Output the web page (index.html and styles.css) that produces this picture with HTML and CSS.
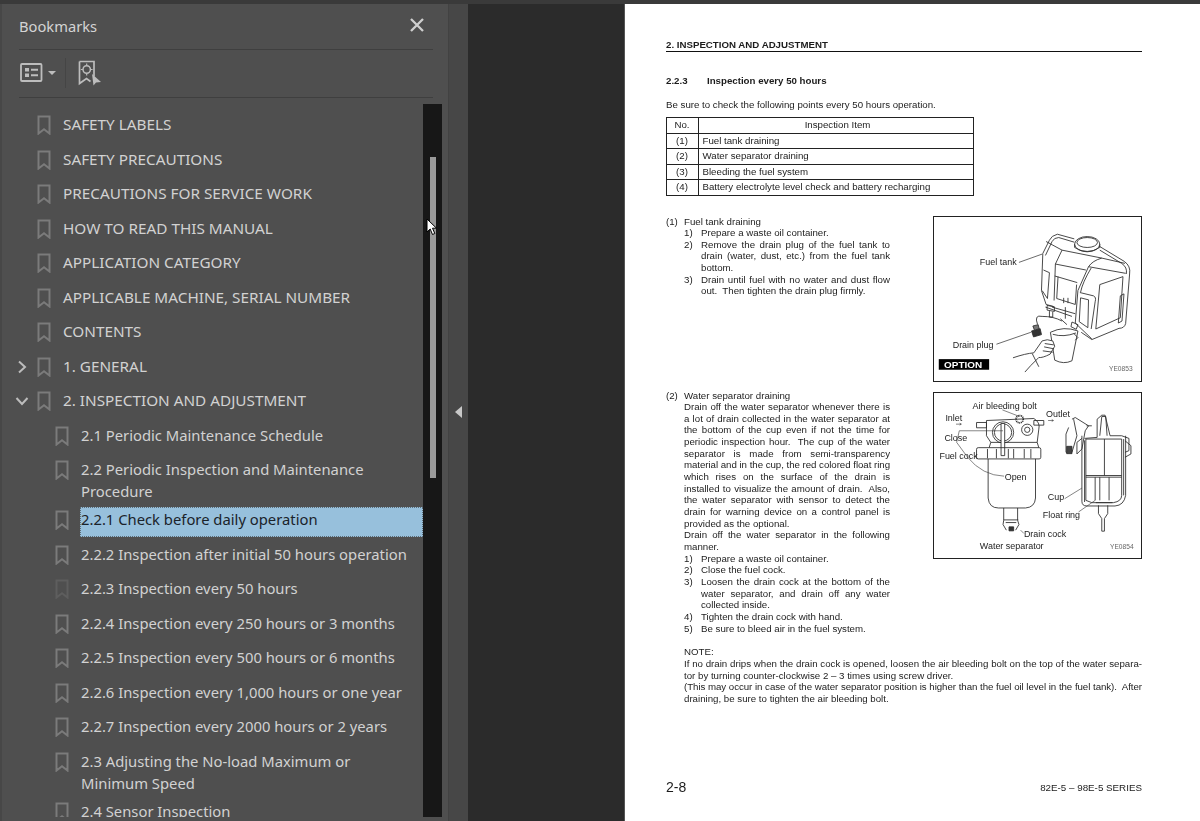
FILE: index.html
```html
<!DOCTYPE html>
<html lang="en">
<head>
<meta charset="utf-8">
<title>Bookmarks</title>
<link rel="stylesheet" href="styles.css">
</head>
<body>
<svg class="defs" width="0" height="0" aria-hidden="true">
  <symbol id="bm" viewBox="0 0 14 20"><path d="M1.5 1.5h11v17L7 14.2 1.5 18.5z" fill="none" stroke="currentColor" stroke-width="2"/></symbol>
</svg>
<div class="app">
  <aside class="panel">
    <header class="panel-head">
      <span class="panel-title">Bookmarks</span>
      <svg class="close" width="16" height="16" viewBox="0 0 16 16"><path d="M2 2l12 12M14 2L2 14" stroke="#cfcfcf" stroke-width="2.3" fill="none"/></svg>
    </header>
    <div class="toolbar">
      <svg width="23" height="19" viewBox="0 0 23 19"><rect x="1" y="1" width="20.5" height="17" rx="1" fill="none" stroke="#bdbdbd" stroke-width="1.8"/><rect x="5" y="5" width="4" height="3.5" fill="#bdbdbd"/><rect x="5" y="10.500" width="4" height="3.500" fill="#bdbdbd"/><path d="M11 6.700h7M11 12.200h7" stroke="#bdbdbd" stroke-width="2"/></svg>
      <span class="caret"></span>
      <span class="tool-sep"></span>
      <svg width="24" height="26" viewBox="0 0 24 26"><path d="M1.500 1.500h14.500v15M1.500 1.500v22l7-5 4 3" fill="none" stroke="#bdbdbd" stroke-width="1.700"/><circle cx="8.700" cy="9.500" r="3.700" fill="none" stroke="#bdbdbd" stroke-width="1.500"/><path d="M8.700 3.500v2M8.700 13.500v2M2.800 9.500h2M12.600 9.500h2" stroke="#bdbdbd" stroke-width="1.200"/><path d="M14 14l9 8-5 .5-2.500 3z" fill="#bdbdbd"/></svg>
    </div>
    <div class="tree-wrap">
      <ul class="tree">
        <li class="row"><svg class="bm"><use href="#bm"/></svg><span class="label">SAFETY LABELS</span></li>
        <li class="row"><svg class="bm"><use href="#bm"/></svg><span class="label">SAFETY PRECAUTIONS</span></li>
        <li class="row"><svg class="bm"><use href="#bm"/></svg><span class="label">PRECAUTIONS FOR SERVICE WORK</span></li>
        <li class="row"><svg class="bm"><use href="#bm"/></svg><span class="label">HOW TO READ THIS MANUAL</span></li>
        <li class="row"><svg class="bm"><use href="#bm"/></svg><span class="label">APPLICATION CATEGORY</span></li>
        <li class="row"><svg class="bm"><use href="#bm"/></svg><span class="label">APPLICABLE MACHINE, SERIAL NUMBER</span></li>
        <li class="row"><svg class="bm"><use href="#bm"/></svg><span class="label">CONTENTS</span></li>
        <li class="row"><svg class="chev" viewBox="0 0 12 14"><path d="M3 1.500L9 7l-6 5.500" fill="none" stroke="#bcbcbc" stroke-width="2"/></svg><svg class="bm"><use href="#bm"/></svg><span class="label">1. GENERAL</span></li>
        <li class="row"><svg class="chev" viewBox="0 0 14 12"><path d="M1.500 3L7 9l5.500-6" fill="none" stroke="#bcbcbc" stroke-width="2"/></svg><svg class="bm"><use href="#bm"/></svg><span class="label">2. INSPECTION AND ADJUSTMENT</span></li>
        <li class="row sub"><svg class="bm"><use href="#bm"/></svg><span class="label">2.1 Periodic Maintenance Schedule</span></li>
        <li class="row sub"><svg class="bm"><use href="#bm"/></svg><span class="label">2.2 Periodic Inspection and Maintenance<br>Procedure</span></li>
        <li class="row sub"><svg class="bm"><use href="#bm"/></svg><span class="label selected">2.2.1 Check before daily operation</span></li>
        <li class="row sub"><svg class="bm"><use href="#bm"/></svg><span class="label">2.2.2 Inspection after initial 50 hours operation</span></li>
        <li class="row sub"><svg class="bm dim"><use href="#bm"/></svg><span class="label">2.2.3 Inspection every 50 hours</span></li>
        <li class="row sub"><svg class="bm"><use href="#bm"/></svg><span class="label">2.2.4 Inspection every 250 hours or 3 months</span></li>
        <li class="row sub"><svg class="bm"><use href="#bm"/></svg><span class="label">2.2.5 Inspection every 500 hours or 6 months</span></li>
        <li class="row sub"><svg class="bm"><use href="#bm"/></svg><span class="label">2.2.6 Inspection every 1,000 hours or one year</span></li>
        <li class="row sub"><svg class="bm"><use href="#bm"/></svg><span class="label">2.2.7 Inspection every 2000 hours or 2 years</span></li>
        <li class="row sub"><svg class="bm"><use href="#bm"/></svg><span class="label">2.3 Adjusting the No-load Maximum or<br>Minimum Speed</span></li>
        <li class="row sub"><svg class="bm"><use href="#bm"/></svg><span class="label">2.4 Sensor Inspection</span></li>
      </ul>
      <div class="scrollbar"><div class="thumb"></div></div>
    </div>
  </aside>
  <div class="strip"><span class="collapse"></span></div>
  <main class="viewer">
    <article class="pdf">
      <h1 class="p-head">2. INSPECTION AND ADJUSTMENT</h1>
      <h2 class="p-sub"><span class="p-sub-no">2.2.3</span>Inspection every 50 hours</h2>
      <p class="p-intro">Be sure to check the following points every 50 hours operation.</p>
      <table class="p-table">
        <tr><th class="c1">No.</th><th>Inspection Item</th></tr>
        <tr><td class="c1">(1)</td><td>Fuel tank draining</td></tr>
        <tr><td class="c1">(2)</td><td>Water separator draining</td></tr>
        <tr><td class="c1">(3)</td><td>Bleeding the fuel system</td></tr>
        <tr><td class="c1">(4)</td><td>Battery electrolyte level check and battery recharging</td></tr>
      </table>

      <section class="p-sec first">
        <div class="p-text">
          <div class="ln"><span class="n0">(1)</span>Fuel tank draining</div>
          <div class="step"><span class="n">1)</span><div>Prepare a waste oil container.</div></div>
          <div class="step"><span class="n">2)</span><div><div class="j">Remove the drain plug of the fuel tank to</div><div class="j">drain (water, dust, etc.) from the fuel tank</div><div>bottom.</div></div></div>
          <div class="step"><span class="n">3)</span><div><div class="j">Drain until fuel with no water and dust flow</div><div>out.&nbsp; Then tighten the drain plug firmly.</div></div></div>
        </div>
        <figure class="fig fig1">
          <svg viewBox="24 18 624 495" width="207" height="164">
            <g fill="none" stroke="#2c2c2c" stroke-width="2.600" stroke-linejoin="round">
              <path d="M352 128L372 88Q378 74 396 70L447 84M522 106L598 152Q618 166 614 190L602 340Q598 354 582 354L500 388L468 366"/>
              <path d="M360 134L380 92Q386 80 400 80L447 94M524 118L590 158Q608 170 604 190"/>
              <path d="M352 128L348 240L362 282L384 288M362 92L410 118L390 160L386 270"/>
              <path d="M410 118L530 142L600 158M530 142Q502 150 490 168L458 240L450 338L500 386M490 168L602 188M498 172Q472 215 466 245"/>
              <path d="M390 160L482 178M388 196L456 216M398 198L394 264L450 282L454 222"/>
              <path d="M464 246L505 256Q514 260 510 274L498 356"/>
              <path d="M466 262L490 268L488 352L462 334z"/>
              <path d="M354 178L372 186L366 264L350 240"/>
              <path d="M524 222L594 198L586 322L512 356z"/>
              <path d="M586 256L597 250L591 332L580 338z"/>
              <ellipse cx="486" cy="100" rx="38" ry="23" fill="#fff"/>
              <ellipse cx="486" cy="95" rx="31" ry="15"/>
              <path d="M448 100v10M524 100v10M448 110Q486 134 524 110"/>
              <path d="M365 285l22 4v14l-22-4zM372 302v18h10v-16M420 290v35M440 335l18 8-5 14-16-8zM405 325l20 18M415 262v16M428 262v16"/>
              <path d="M380 290L450 310M360 290L440 318"/>
              <path d="M336 342Q325 312 350 318Q385 318 410 332"/>
              <path d="M318 362l26-7 4 18-24 7z" fill="#333"/>
              <path d="M322 347l16-4 3 12-14 5z" fill="#777"/>
              <path d="M375 366Q415 346 458 362L440 452Q415 464 388 450z" fill="#fff"/>
              <path d="M382 372Q415 382 452 368M446 370l12 12-8 8"/>
              <path d="M262 443Q300 430 325 428L350 392Q365 385 382 392L388 408L374 432Q350 444 340 442L316 466L298 486M320 430L340 470M358 400L385 404M356 410L386 416M352 422L382 426" fill="#fff"/>
            </g>
            <g fill="none" stroke="#333" stroke-width="2.200"><path d="M280 155L350 130M212 402L316 366"/></g>
            <text x="162" y="163" class="fl">Fuel tank</text>
            <text x="80" y="413" class="fl">Drain plug</text>
            <rect x="38" y="447" width="152" height="32" fill="#000"/>
            <text x="54" y="474" class="fo">OPTION</text>
            <text x="552" y="482" class="fc">YE0853</text>
          </svg>
        </figure>
      </section>

      <section class="p-sec second">
        <div class="p-text">
          <div class="ln"><span class="n0">(2)</span>Water separator draining</div>
          <div class="in">
            <div class="j">Drain off the water separator whenever there is</div>
            <div class="j">a lot of drain collected in the water separator at</div>
            <div class="j">the bottom of the cup even if not the time for</div>
            <div class="j">periodic inspection hour.&nbsp; The cup of the water</div>
            <div class="j">separator is made from semi-transparency</div>
            <div class="j tight">material and in the cup, the red colored float ring</div>
            <div class="j">which rises on the surface of the drain is</div>
            <div class="j">installed to visualize the amount of drain.&nbsp; Also,</div>
            <div class="j">the water separator with sensor to detect the</div>
            <div class="j">drain for warning device on a control panel is</div>
            <div>provided as the optional.</div>
            <div class="j">Drain off the water separator in the following</div>
            <div>manner.</div>
          </div>
          <div class="step"><span class="n">1)</span><div>Prepare a waste oil container.</div></div>
          <div class="step"><span class="n">2)</span><div>Close the fuel cock.</div></div>
          <div class="step"><span class="n">3)</span><div><div class="j">Loosen the drain cock at the bottom of the</div><div class="j">water separator, and drain off any water</div><div>collected inside.</div></div></div>
          <div class="step"><span class="n">4)</span><div>Tighten the drain cock with hand.</div></div>
          <div class="step"><span class="n">5)</span><div>Be sure to bleed air in the fuel system.</div></div>
        </div>
        <figure class="fig fig2">
          <svg viewBox="24 21 624 498" width="207" height="165">
            <g fill="none" stroke="#2c2c2c" stroke-width="2.600" stroke-linejoin="round">
              <path d="M152 110h30v16h-30zM182 104L325 98M182 104V150L195 170H335L340 130Q345 110 325 98M325 104h30v14h-30zM195 170L190 186M335 170L340 186"/>
              <circle cx="232" cy="140" r="32"/>
              <circle cx="232" cy="140" r="26"/>
              <rect x="226" y="113" width="11" height="97" fill="#fff"/>
              <circle cx="305" cy="132" r="17"/>
              <circle cx="305" cy="132" r="8"/>
              <circle cx="282" cy="100" r="11" stroke-dasharray="3 2" stroke-width="5"/>
              <rect x="152" y="186" width="194" height="34" rx="5"/>
              <path d="M187 220V338Q190 368 218 368H300Q328 366 330 338V220"/>
              <path d="M185 190v28M212 190v28M248 190v28M264 190v28M296 190v28M316 190v28"/>
              <path d="M234 368V405L232 418L242 435M276 368V405L280 418L270 435M234 404h44M240 412h32"/>
              <rect x="250" y="425" width="14" height="12" fill="#333"/>
              <path d="M470 150V348Q470 362 485 362H570Q597 360 602 330V150"/>
              <path d="M482 160V345L500 352H565Q590 348 590 330V160zM478 164V350M596 160V330M482 275H590M482 270H590M510 275V345M552 275V345M538 160V270M524 275V345"/>
              <path d="M478 158L516 155V100L530 88H540L555 150H590L612 158V195L600 200M470 158L455 170V205L470 190"/>
              <path d="M440 100L450 95L490 120L480 135L470 190M430 125L422 145V200H440L455 150L445 100"/>
              <path d="M524 150L530 92H542L546 150M484 120H500"/>
              <path d="M520 360V385L530 400V438H538V400L548 385V360M512 352h50"/>
              <rect x="424" y="182" width="16" height="22" fill="#444"/>
              <path d="M600 165L618 180V205L600 215"/>
            </g>
            <g fill="none" stroke="#333" stroke-width="1.800">
              <path d="M232 135H100L92 170L125 215Q170 270 235 272M230 72L282 92M90 115h16l-5-3M106 115l-5 3M368 104h16l-5-3M384 104l-5 3M418 340L470 308M460 380L510 345M285 435L295 445"/>
            </g>
            <text x="140" y="69" class="fl">Air bleeding bolt</text>
            <text x="58" y="106" class="fl">Inlet</text>
            <text x="55" y="167" class="fl">Close</text>
            <text x="40" y="220" class="fl">Fuel cock</text>
            <text x="237" y="285" class="fl">Open</text>
            <text x="362" y="92" class="fl">Outlet</text>
            <text x="367" y="343" class="fl">Cup</text>
            <text x="352" y="398" class="fl">Float ring</text>
            <text x="295" y="457" class="fl">Drain cock</text>
            <text x="162" y="492" class="fl">Water separator</text>
            <text x="555" y="491" class="fc">YE0854</text>
          </svg>
        </figure>
      </section>

      <div class="p-note">
        <div>NOTE:</div>
        <div class="j">If no drain drips when the drain cock is opened, loosen the air bleeding bolt on the top of the water separa-</div>
        <div>tor by turning counter-clockwise 2 – 3 times using screw driver.</div>
        <div class="j tight">(This may occur in case of the water separator position is higher than the fuel oil level in the fuel tank).&nbsp; After</div>
        <div>draining, be sure to tighten the air bleeding bolt.</div>
      </div>
      <footer class="p-foot"><span class="p-num">2-8</span><span class="p-series">82E-5 – 98E-5 SERIES</span></footer>
    </article>
  </main>
</div>
<svg class="cursor" width="12" height="18" viewBox="0 0 12 18"><path d="M1 1v13l3.200-3 2.300 5.500 2.300-1-2.300-5.300H10.500z" fill="#fff" stroke="#000" stroke-width="1"/></svg>
</body>
</html>
```
FILE: styles.css
```css
* { box-sizing: border-box; }
html, body { margin: 0; height: 100%; overflow: hidden; }
body { background: #3a3a3a; font-family: "Noto Sans", sans-serif; }
.defs { position: absolute; }

.app { display: flex; height: 821px; padding-top: 4px; background: #3a3a3a; }

/* Bookmarks panel */
.panel { width: 448px; flex: none; background: #4f4f4f; border-left: 2px solid #474747; overflow: hidden; display: flex; flex-direction: column; }
.panel-head { display: flex; justify-content: space-between; align-items: center; height: 46px; margin: 0 15px 0 17px; padding-bottom: 3px; border-bottom: 1px solid #3f3f3f; }
.panel-title { font-size: 14.7px; color: #d4d4d4; padding-top: 1px; }
.close { margin-right: 8px; margin-top: -1px; }
.toolbar { display: flex; align-items: center; height: 48px; margin: 0 15px 0 17px; padding: 0 0 2px 1px; border-bottom: 1px solid #3f3f3f; }
.caret { width: 0; height: 0; margin-left: 5px; border: 4px solid transparent; border-top-color: #bdbdbd; border-bottom: 0; }
.tool-sep { width: 1px; height: 30px; margin: 0 12px 0 9px; background: #454545; }

.tree-wrap { display: flex; flex: 1; min-height: 0; padding-top: 6px; }
.tree { list-style: none; margin: 0; padding: 8px 0 0 0; width: 421px; height: 713px; overflow: hidden; flex: none; }
.row { display: flex; align-items: flex-start; min-height: 34.5px; position: relative; padding-left: 61px; }
.row.sub { padding-left: 78px; }
.bm { position: absolute; left: 35px; top: 3px; width: 14px; height: 20px; color: #7b7b7b; }
.sub .bm { left: 53px; }
.bm.dim { color: #5e5e5e; }
.chev { position: absolute; left: 13px; top: 6px; width: 14px; height: 14px; }
.label { display: block; flex: 1; font-size: 15.3px; line-height: 22px; padding: 1px 0 5px; color: #d2d2d2; }
.sub .label { font-size: 14.8px; padding-left: 1px; }
.label.selected { min-height: 30px; background: #97c0dc; color: #1b232a; outline: 1px dotted #5c6b75; outline-offset: -1px; }

.scrollbar { width: 19px; height: 713px; background: #171717; padding: 53px 6.5px 0; flex: none; }
.thumb { height: 321px; background: #9a9a9a; }

.strip { width: 20px; flex: none; background: #474747; border-left: 1px solid #424242; display: flex; align-items: center; justify-content: center; padding-bottom: 1px; }
.collapse { width: 0; height: 0; border: 6.5px solid transparent; border-left: 0; border-right: 7px solid #c8c8c8; }

.viewer { flex: 1; background: #2b2b2b; padding-left: 157px; overflow: hidden; }

/* PDF page */
.pdf { width: 575px; height: 825px; margin-top: -4px; padding: 40px 58px 0 41px; background: #fff; color: #1c1c1c; font-family: "Liberation Sans", Arial, sans-serif; font-size: 9.7px; line-height: 11.65px; box-shadow: -1px 0 #555; filter: blur(.35px); }
.p-head { margin: 0; height: 12px; font-size: 9.7px; line-height: 10px; font-weight: bold; border-bottom: 1px solid #111; }
.p-sub { margin: 23px 0 0; font-size: 9.7px; line-height: 12px; font-weight: bold; display: flex; }
.p-sub-no { width: 41px; }
.p-intro { margin: 12px 0 0; line-height: 12px; }
.p-table { margin: 6px 0 0 -.5px; width: 308px; border-collapse: collapse; table-layout: fixed; }
.p-table th, .p-table td { border: 1px solid #222; height: 15.5px; padding: 0 0 0 4px; font-weight: normal; font-size: 9.7px; line-height: 12px; text-align: left; }
.p-table th { text-align: center; }
.p-table .c1 { width: 32px; text-align: center; padding: 0; }

.p-sec { display: flex; justify-content: space-between; align-items: flex-start; width: 476px; }
.p-sec.first { margin-top: 20px; height: 174px; }
.p-text { width: 224px; }
.ln { display: flex; }
.n0 { width: 18px; flex: none; }
.in { padding-left: 18px; }
.step { display: flex; padding-left: 18px; }
.n { width: 17px; flex: none; }
.step > div { flex: 1; }
.j { text-align: justify; text-align-last: justify; white-space: nowrap; }
.tight { letter-spacing: -.05px; }

.fig { margin: 0; width: 209px; height: 166px; border: 1px solid #222; flex: none; }
.fig svg { display: block; }
.fig2 { height: 167px; margin-top: 2px; }
.fl { font-family: "Liberation Sans", sans-serif; font-size: 27px; fill: #222; }
.fo { font-family: "Liberation Sans", sans-serif; font-size: 30px; font-weight: bold; fill: #fff; }
.fc { font-family: "Liberation Sans", sans-serif; font-size: 20px; fill: #666; }

.p-note { margin: 12px 0 0 18px; width: 458px; }
.p-foot { display: flex; justify-content: space-between; align-items: center; margin-top: 72px; width: 476px; }
.p-num { font-size: 14px; line-height: 18px; }
.p-series { font-size: 9.8px; line-height: 18px; padding-top: 2px; }

.cursor { position: absolute; left: 426px; top: 218px; }
```
